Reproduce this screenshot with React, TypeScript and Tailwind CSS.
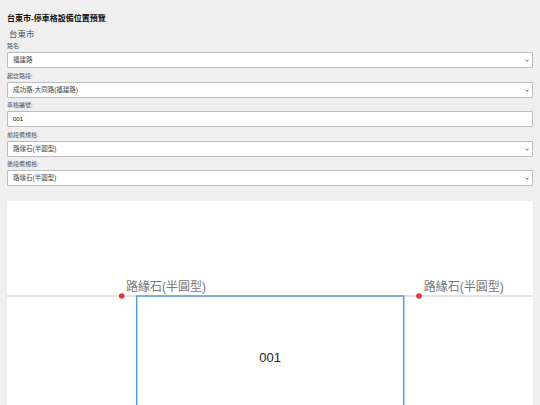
import { ReactNode } from 'react'

const font = { fontFamily: '"Liberation Sans", "Noto Sans CJK TC", sans-serif' }

const fields = [
  { label: '路名:', value: '福建路', type: 'select' },
  { label: '起訖路段:', value: '成功路-大同路(福建路)', type: 'select' },
  { label: '車格編號:', value: '001', type: 'input' },
  { label: '前段備規格:', value: '路緣石(半圓型)', type: 'select' },
  { label: '後段備規格:', value: '路緣石(半圓型)', type: 'select' }
]

function Chevron() {
  return (
    <svg className="absolute right-[3px] top-[6px] w-[4px] h-[3px]" viewBox="0 0 10 8">
      <path d="M1 1.5 L5 6 L9 1.5" fill="none" stroke="#555" strokeWidth="2.2" />
    </svg>
  )
}

function Field({ label, children }: { label: string; children: ReactNode }) {
  return (
    <div>
      <div className="text-[6px] leading-[8px] text-[#555] mb-[2px]">{label}</div>
      {children}
    </div>
  )
}

export default function App() {
  return (
    <main className="min-h-[405px] bg-[#efefef] px-[7px] pt-[14px] overflow-hidden" style={font}>
      <h1 className="text-[8px] leading-[10px] font-bold text-[#111]">台東市-停車格設備位置預覽</h1>
      <h2 className="mt-[4.5px] pl-[2px] text-[8.5px] leading-[11px] text-[#555]">台東市</h2>

      <div className="mt-[2.5px] flex flex-col gap-[3.5px]">
        {fields.map((f) => (
          <Field key={f.label} label={f.label}>
            <div className="relative h-[16px] bg-white border border-[#bdbdbd] rounded-[1px] flex items-center pl-[5px]">
              <span className={f.type === 'input' ? 'text-[6px] text-[#111]' : 'text-[6.5px] text-[#444]'}>
                {f.value}
              </span>
              {f.type === 'select' && <Chevron />}
            </div>
          </Field>
        ))}
      </div>

      {/* parking space preview */}
      <div className="mt-[14.5px] bg-white h-[220px] overflow-hidden">
        <svg width="100%" height="220" viewBox="0 0 526 220" preserveAspectRatio="xMinYMin">
          <line x1="0" y1="95" x2="526" y2="95" stroke="#dcdcdc" strokeWidth="1.5" />
          <rect x="129.7" y="95" width="267" height="200" fill="none" stroke="#5b9bd5" strokeWidth="1.5" />
          <circle cx="114.7" cy="95" r="2.8" fill="#e8373a" />
          <circle cx="412" cy="95" r="2.8" fill="#e8373a" />
          <text x="119" y="90" fontSize="12" fill="#777" style={font}>路緣石(半圓型)</text>
          <text x="416.7" y="90" fontSize="12" fill="#777" style={font}>路緣石(半圓型)</text>
          <text x="263.2" y="160.5" fontSize="13" fill="#222" textAnchor="middle" style={font}>001</text>
        </svg>
      </div>
    </main>
  )
}
